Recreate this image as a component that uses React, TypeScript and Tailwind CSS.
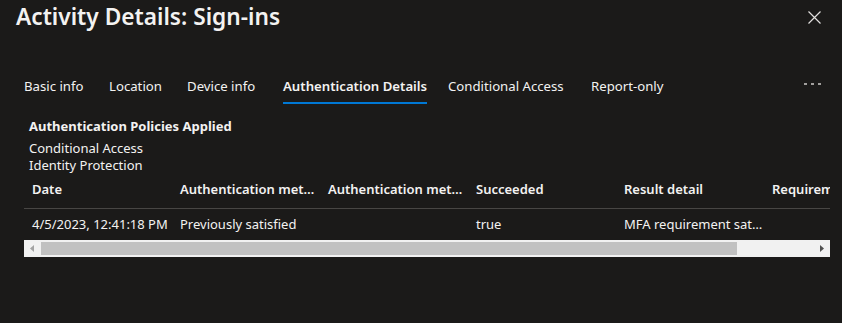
import React from 'react';

const tabs = [
  { label: 'Basic info', w: 'w-[85px]' },
  { label: 'Location', w: 'w-[78px]' },
  { label: 'Device info', w: 'w-[96px]' },
  { label: 'Authentication Details', w: 'w-[165px]', active: true },
  { label: 'Conditional Access', w: 'w-[143px]' },
  { label: 'Report-only', w: 'w-[100px]' },
];

const columns = [
  'Date',
  'Authentication method',
  'Authentication method detail',
  'Succeeded',
  'Result detail',
  'Requirement',
];

const row = ['4/5/2023, 12:41:18 PM', 'Previously satisfied', '', 'true', 'MFA requirement satisfied by claim in the token', ''];

export default function App() {
  return (
    <div className="w-[842px] h-[323px] overflow-hidden bg-[#1b1a19] text-[#f3f2f1] font-['Segoe_UI','Noto_Sans',sans-serif]">
      {/* header */}
      <div className="flex items-start justify-between pl-4 pr-[21px] pt-[1px]">
        <h1 className="text-[22.7px] leading-8 font-semibold">Activity Details: Sign-ins</h1>
        <button className="mt-[10px] text-[#e1dfdd]">
          <svg width="13" height="13" viewBox="0 0 13 13" stroke="currentColor" strokeWidth="1.2">
            <path d="M0.5 0.5l12 12M12.5 0.5l-12 12" />
          </svg>
        </button>
      </div>

      {/* tabs */}
      <div className="flex items-start pl-3 pr-[21px] mt-[40px]">
        {tabs.map((t) => (
          <div key={t.label} className={`${t.w} shrink-0 pl-3`}>
            <span
              className={`inline-block text-[13.2px] leading-5 whitespace-nowrap pb-[6px] ${
                t.active ? 'font-semibold border-b-2 border-[#0078d4]' : 'border-b-2 border-transparent'
              }`}
            >
              {t.label}
            </span>
          </div>
        ))}
        <div className="ml-auto mt-[10px] flex gap-[4px]">
          <span className="w-[3px] h-[2px] bg-[#a19f9d]" />
          <span className="w-[3px] h-[2px] bg-[#a19f9d]" />
          <span className="w-[3px] h-[2px] bg-[#a19f9d]" />
        </div>
      </div>

      {/* content */}
      <div className="pl-[29px] mt-[12px] text-[13px]">
        <div className="font-bold leading-5">Authentication Policies Applied</div>
        <div className="mt-[4px] leading-[17px]">Conditional Access</div>
        <div className="leading-[17px]">Identity Protection</div>
      </div>

      <div className="ml-6 w-[806px] overflow-hidden text-[13px]">
        <div className="flex h-[35px] items-center pb-[2px] border-b border-[#484644] font-semibold">
          {columns.map((c, i) => (
            <div
              key={i}
              className={`w-[148px] shrink-0 pl-2 whitespace-nowrap overflow-hidden ${i < 5 ? 'pr-[5px] text-ellipsis' : ''}`}
            >
              {c}
            </div>
          ))}
        </div>
        <div className="flex h-[31px] items-center">
          {row.map((c, i) => (
            <div key={i} className="w-[148px] shrink-0 pl-2 whitespace-nowrap overflow-hidden text-ellipsis">
              {c}
            </div>
          ))}
        </div>
        {/* scrollbar */}
        <div className="flex h-[17px] items-center bg-[#f1f1f1]">
          <div className="w-[17px] flex justify-center">
            <svg width="5" height="7" viewBox="0 0 5 7">
              <path d="M4 0v7L0 3.5z" fill="#a3a3a3" />
            </svg>
          </div>
          <div className="w-[696px] h-[13px] bg-[#c1c1c1]" />
          <div className="ml-auto w-[17px] flex justify-center">
            <svg width="5" height="7" viewBox="0 0 5 7">
              <path d="M1 0v7l4-3.5z" fill="#505050" />
            </svg>
          </div>
        </div>
      </div>
    </div>
  );
}
